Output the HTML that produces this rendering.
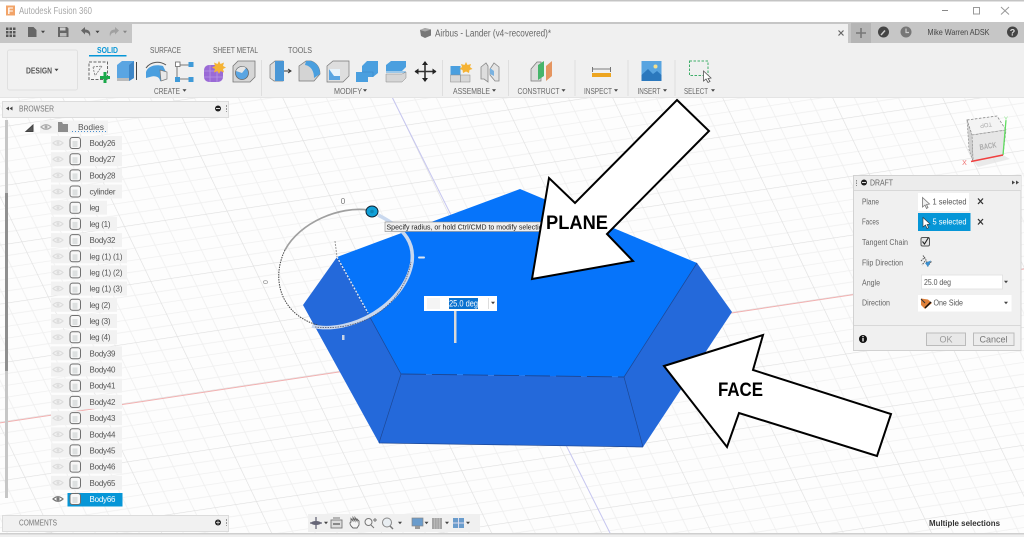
<!DOCTYPE html>
<html lang="en"><head><meta charset="utf-8"><title>Autodesk Fusion 360</title>
<style>
html,body{margin:0;padding:0;background:#fff;width:1024px;height:537px;overflow:hidden}
svg{display:block;filter:blur(.3px)}
text{font-family:"Liberation Sans",sans-serif;fill:#555;font-size:8px}
.t{font-size:8px;fill:#666}
.b{font-size:8px;fill:#555}
.p{font-size:8px;fill:#666}
</style></head><body>
<svg width="1024" height="537" viewBox="0 0 1024 537" xmlns="http://www.w3.org/2000/svg">
<defs>
<pattern id="grid" width="100" height="100" patternUnits="userSpaceOnUse" patternTransform="matrix(1.026 -.154 .264 .55 511 345)">
<rect width="100" height="100" fill="#fdfdfd"/>
<path d="M20 0V100M40 0V100M60 0V100M80 0V100" stroke="#efefef" stroke-width=".8" fill="none"/>
<path d="M0 20H100M0 40H100M0 60H100M0 80H100" stroke="#efefef" stroke-width="1.300" fill="none"/>
<path d="M0 0V100" stroke="#dedede" stroke-width="1.200" fill="none"/>
<path d="M0 0H100" stroke="#dedede" stroke-width="2" fill="none"/>
</pattern>
<g id="eye"><path d="M-5 0Q0-4.500 5 0Q0 4.500-5 0Z" fill="none" stroke="#ddd" stroke-width="1.200"/><circle r="1.500" fill="#ddd"/></g>
<g id="doc"><rect x="-5" y="-5.500" width="10.500" height="11" rx="2.500" fill="#f8f8f8" stroke="#6f6f6f" stroke-width="1"/><rect x="-2.500" y="-2" width="5" height="6" fill="#dde0e0"/></g>
<path id="caret" d="M-2-1.300H2L0 1.300Z" fill="#444"/>
</defs>

<!-- viewport -->
<rect y="97" width="1024" height="440" fill="url(#grid)"/>
<path d="M0 422.900L1024 269" stroke="#f2b0b0" stroke-width="1" fill="none"/>
<path d="M392 97L612 537" stroke="#c5c5f0" stroke-width="1" fill="none"/>

<!-- solid -->
<polygon points="520,189 697,263 624,377 401,374 337,257" fill="#0674fa"/>
<polygon points="337,257 401,374 379,443 303,305" fill="#2469da"/>
<polygon points="697,263 732,312 643,447 624,377" fill="#2469da"/>
<polygon points="401,374 624,377 643,447 379,443" fill="#2469da"/>
<path d="M624 377L697 263M401 374L379 443M624 377L643 447M337 257L401 374M379 443L643 447" fill="none" stroke="#1c4795" stroke-width=".7"/>
<path d="M401 374L624 377" fill="none" stroke="#1c4795" stroke-width=".9" stroke-dasharray="25 6"/>

<!-- radius manipulator -->
<path d="M368 210C340 206 300 222 285 250" fill="none" stroke="#a0a0a0" stroke-width="1.700"/>
<path d="M285 250C268 285 286 325 335 328" fill="none" stroke="#444" stroke-width="1" stroke-dasharray="1.500 1"/>
<path d="M312 326C350 335 405 305 412 262C414 245 408 230 378 215" fill="none" stroke="#c9d8ee" stroke-width="3.600"/>
<path d="M315 327C365 332 403 305 411 262" fill="none" stroke="#556" stroke-width=".8" stroke-dasharray="1.500 1"/>
<path d="M335 241L337 257" stroke="#999" stroke-width="1" stroke-dasharray="2 1" fill="none"/>
<path d="M337 257L368 313" stroke="#dfe6f2" stroke-width="1.400" stroke-dasharray="2 1.500" fill="none"/>
<ellipse cx="372" cy="211.500" rx="6" ry="5.500" fill="#10a0d8" stroke="#123" stroke-width="1"/>
<circle cx="372" cy="211.500" r="1.800" fill="#0c84b4"/>
<text x="343" y="204" style="font-size:8px;fill:#777" text-anchor="middle">0</text>
<text transform="translate(268,282) rotate(-90)" style="font-size:7px;fill:#888" text-anchor="middle">0</text>
<rect x="418" y="256.500" width="7" height="2" rx="1" fill="#dde6f0"/>
<rect x="342" y="335" width="2.500" height="5" fill="#c8d4e6"/>
<rect x="385" y="222" width="156" height="9.500" fill="#efefef" stroke="#888" stroke-width=".6"/>
<text x="386.500" y="229.500" style="font-size:7.500px;fill:#222" textLength="160" lengthAdjust="spacingAndGlyphs">Specify radius, or hold Ctrl/CMD to modify selection</text>

<rect x="454" y="311" width="2.500" height="32" fill="#d8d8d8"/>
<rect x="424" y="296" width="73" height="15" fill="#fff"/>
<rect x="427" y="298" width="13" height="11" fill="#f4f4f4"/>
<rect x="488" y="298" width="1" height="11" fill="#ddd"/>
<rect x="449" y="298" width="29" height="11" fill="#0a72d0"/>
<text x="449" y="306.500" style="font-size:9px;fill:#fff" textLength="29" lengthAdjust="spacingAndGlyphs">25.0 deg</text>
<use href="#caret" x="493" y="303"/>

<!-- call-out arrows -->
<polygon points="677,100 709,131 607,234 633,261 532,279 549,178 575,203" fill="#fff" stroke="#000" stroke-width="2" stroke-linejoin="miter"/>
<text x="546" y="229" textLength="62" lengthAdjust="spacingAndGlyphs" style="font-size:19px;font-weight:bold;fill:#000">PLANE</text>
<polygon points="664,366 763,335 753,370 891,414 877,456 739,413 727,447" fill="#fff" stroke="#000" stroke-width="2" stroke-linejoin="miter"/>
<text x="718" y="396" textLength="45" lengthAdjust="spacingAndGlyphs" style="font-size:19.500px;font-weight:bold;fill:#000">FACE</text>

<!-- title bar -->
<rect width="1024" height="22" fill="#fff"/>
<rect width="1024" height="1.500" fill="#c4c4c4"/>
<rect x="6" y="5.500" width="9" height="10" fill="#f2a469"/>
<text x="7.500" y="14" style="font-size:9.500px;font-weight:bold;fill:#fff">F</text>
<text x="19" y="14" textLength="73" lengthAdjust="spacingAndGlyphs" style="font-size:10px;fill:#a8a8a8">Autodesk Fusion 360</text>
<path d="M942 10.500H948" stroke="#888" stroke-width="1"/>
<rect x="973.500" y="7.500" width="6" height="6.500" fill="none" stroke="#999" stroke-width="1"/>
<path d="M1001 7L1009 14.500M1009 7L1001 14.500" stroke="#999" stroke-width="1"/>

<!-- toolbar -->
<rect y="22" width="1024" height="75" fill="#f0f0f0"/>
<rect y="22" width="1024" height="21" fill="#c6c6c6"/>
<rect x="132" y="24" width="716" height="19" fill="#f0f0f0"/>
<rect y="42" width="132" height="1" fill="#c6c6c6"/>
<rect y="97" width="1024" height="1" fill="#e4e4e4"/>

<!-- quick access icons -->
<g fill="#555"><rect x="6" y="27.500" width="2.500" height="2.500"/><rect x="9.500" y="27.500" width="2.500" height="2.500"/><rect x="13" y="27.500" width="2.500" height="2.500"/><rect x="6" y="31" width="2.500" height="2.500"/><rect x="9.500" y="31" width="2.500" height="2.500"/><rect x="13" y="31" width="2.500" height="2.500"/><rect x="6" y="34.500" width="2.500" height="2.500"/><rect x="9.500" y="34.500" width="2.500" height="2.500"/><rect x="13" y="34.500" width="2.500" height="2.500"/></g>
<path d="M28 27H33.500L36.500 30V37H28Z" fill="#666"/>
<use href="#caret" x="43" y="32"/>
<path d="M58 27H67L68.500 28.500V37H58Z" fill="#666"/><rect x="60" y="27.500" width="5.500" height="3" fill="#ccc"/><rect x="60" y="33" width="6.500" height="3.500" fill="#bbb"/>
<path d="M81 30.500L85 27V29.500C89 29.500 91 32 90 36.500C89 33.500 88 32.500 85 32.500V34.500Z" fill="#666"/>
<use href="#caret" x="97.500" y="32"/>
<path d="M119 30.500L115 27V29.500C111 29.500 109 32 110 36.500C111 33.500 112 32.500 115 32.500V34.500Z" fill="#a0a0a0"/>
<use href="#caret" x="125" y="32" opacity=".5"/>

<!-- document title -->
<path d="M420 30L425 28L431 29.500V35.500L425 38L421 36Z" fill="#777"/><path d="M420 30L425 31.500L431 29.500L425 28Z" fill="#aaa"/>
<text x="435" y="36.500" textLength="116" lengthAdjust="spacingAndGlyphs" style="font-size:10px;fill:#666">Airbus - Lander (v4~recovered)*</text>
<path d="M838.500 30.500L843.500 35.500M843.500 30.500L838.500 35.500" stroke="#666" stroke-width="1.200"/>

<!-- right side of band -->
<rect x="851" y="23" width="20" height="20" fill="#b5b5b5"/>
<path d="M861 28V38M856 33H866" stroke="#777" stroke-width="1.600"/>
<circle cx="883.500" cy="32" r="5.500" fill="#444"/><path d="M881 35L885 30.500" stroke="#ccc" stroke-width="1.500"/>
<circle cx="906" cy="32" r="5.500" fill="#777"/><path d="M906 28.500V32.500H909" stroke="#ccc" stroke-width="1.200" fill="none"/>
<text x="927.500" y="35" textLength="62" lengthAdjust="spacingAndGlyphs" style="font-size:8.500px;fill:#444">Mike Warren ADSK</text>
<circle cx="1012.500" cy="32" r="5.500" fill="#444"/>
<text x="1012.500" y="35.500" text-anchor="middle" style="font-size:9px;font-weight:bold;fill:#ddd">?</text>

<!-- design button -->
<rect x="7.500" y="50" width="70" height="40" rx="2" fill="#f1f1f1" stroke="#e0e0e0"/>
<text x="26" y="73.500" textLength="26" lengthAdjust="spacingAndGlyphs" style="font-size:8px;font-weight:bold;fill:#555">DESIGN</text>
<use href="#caret" x="56.500" y="70"/>

<!-- tabs -->
<text x="97" y="53" textLength="21" lengthAdjust="spacingAndGlyphs" style="font-size:8px;fill:#0696d7;font-weight:bold">SOLID</text>
<rect x="89" y="55" width="37.500" height="1.500" fill="#0696d7"/>
<text x="150" y="53" textLength="31" lengthAdjust="spacingAndGlyphs" class="t">SURFACE</text>
<text x="213" y="53" textLength="45" lengthAdjust="spacingAndGlyphs" class="t">SHEET METAL</text>
<text x="288" y="53" textLength="24" lengthAdjust="spacingAndGlyphs" class="t">TOOLS</text>

<!-- panel labels -->
<text x="154" y="94" textLength="26" lengthAdjust="spacingAndGlyphs" class="t">CREATE</text><use href="#caret" x="184.500" y="90.500"/>
<text x="334" y="94" textLength="28" lengthAdjust="spacingAndGlyphs" class="t">MODIFY</text><use href="#caret" x="365" y="90.500"/>
<text x="453" y="94" textLength="37" lengthAdjust="spacingAndGlyphs" class="t">ASSEMBLE</text><use href="#caret" x="494" y="90.500"/>
<text x="517.500" y="94" textLength="42" lengthAdjust="spacingAndGlyphs" class="t">CONSTRUCT</text><use href="#caret" x="563.500" y="90.500"/>
<text x="584" y="94" textLength="28" lengthAdjust="spacingAndGlyphs" class="t">INSPECT</text><use href="#caret" x="616" y="90.500"/>
<text x="637.500" y="94" textLength="23" lengthAdjust="spacingAndGlyphs" class="t">INSERT</text><use href="#caret" x="665" y="90.500"/>
<text x="684" y="94" textLength="24" lengthAdjust="spacingAndGlyphs" class="t">SELECT</text><use href="#caret" x="713" y="90.500"/>
<path d="M261.500 60V96M442.500 60V96M508.500 60V96M575 60V96M628 60V96M675 60V96" stroke="#dedede" stroke-width="1"/>

<!-- CREATE icons -->
<rect x="89" y="62" width="18.500" height="17.500" fill="#f5f5f5" stroke="#666" stroke-width="1" stroke-dasharray="3 1.500"/>
<path d="M93 67L102 66M93 67L95 76M102 66L95 76" stroke="#777" stroke-width=".8" stroke-dasharray="2 1" fill="none"/>
<path d="M105 72V83M100 77.500H110" stroke="#1aa84a" stroke-width="3"/>
<path d="M117 65L122 61H134V78L129 81H117Z" fill="#5aa5e2"/><path d="M117 65H129V81H117Z" fill="#5aa5e2"/><path d="M129 65L134 61V78L129 81Z" fill="#3d85c6"/><path d="M117 78H129V81H117Z" fill="#bbb"/><path d="M136.500 62V80" stroke="#444" stroke-width="1"/>
<path d="M146 72C148 66 155 64 163 66L166 72V79L160 81C160 77 155 75 150 77L146 78Z" fill="#4a9fdf"/><path d="M160 70L167 72V79L161 81Z" fill="#e8e8e8" stroke="#777" stroke-width=".7"/><path d="M146 68C151 61 160 61 166 65" stroke="#555" stroke-width="1" fill="none"/>
<path d="M179 65H189M177 67V77M179 79H189" stroke="#777" stroke-width="1"/>
<rect x="175.500" y="62" width="4.500" height="4.500" fill="#fff" stroke="#666" stroke-width=".8"/><rect x="188.500" y="62" width="5" height="5" fill="#3f9ad8"/><rect x="175" y="77" width="5" height="5" fill="#3f9ad8"/><rect x="188.500" y="77" width="5" height="5" fill="#3f9ad8"/>
<rect x="204" y="65" width="19" height="17" rx="5" fill="#9a6ad6"/><path d="M210 65V82M217 65V82M204 71H223M204 77H223" stroke="#b796e6" stroke-width=".8"/><path d="M219 61L220.500 64L224 62.500L223 66L226 67.500L223 69L224 72.500L220.500 71L219 74L217.500 71L214 72.500L215 69L212 67.500L215 66L214 62.500L217.500 64Z" fill="#f5b335"/>
<path d="M233 66L238 61H255V77L250 82H233Z" fill="#d6d6d6" stroke="#777" stroke-width=".8"/><circle cx="242" cy="73" r="6.500" fill="#5aa5e2" stroke="#666" stroke-width=".8"/><path d="M242 73L246 68A6.500 6.500 0 0 0 236 71Z" fill="#e6e6e6"/>

<!-- MODIFY icons -->
<path d="M270 65L275 61H283V81H274L270 78Z" fill="#ddd" stroke="#777" stroke-width=".7"/><path d="M275 61H284V81H275Z" fill="#4a97d6"/><path d="M284 71H290M288 69L291 71L288 73" stroke="#333" stroke-width="1" fill="none"/>
<path d="M299 66L306 61H311C317 63 320 68 320 74L314 81H299Z" fill="#d4d4d4" stroke="#777" stroke-width=".7"/><path d="M306 61H311C317 63 320 68 320 74L314 78C314 71 311 66 305 65Z" fill="#4a9fdf"/>
<path d="M327 66L333 61H349V76L343 82H327Z" fill="#dedede" stroke="#777" stroke-width=".7"/><rect x="329" y="69" width="11" height="11" fill="#5aa5e2"/><path d="M329 69H340V76H334Z" fill="#e8f3fb"/>
<path d="M356 72L362 72V66L367 61H378V73L373 77H368V82H356Z" fill="#4a9fdf"/><path d="M362 72H373V77" stroke="#3a86c6" stroke-width=".6" fill="none"/>
<path d="M386 65L391 61H406V67L402 71H386Z" fill="#4a9fdf"/><path d="M386 72H406" stroke="#4a9fdf" stroke-width="1"/><path d="M386 74L402 74L406 72V78L402 82H386Z" fill="#d6d6d6" stroke="#888" stroke-width=".5"/>
<path d="M425 62V81M415 71.500H436" stroke="#333" stroke-width="1.600"/><path d="M425 61L428 65H422ZM425 82L428 78H422ZM414.500 71.500L418.500 68.500V74.500ZM436.500 71.500L432.500 68.500V74.500Z" fill="#222"/>

<!-- ASSEMBLE icons -->
<rect x="450.500" y="66" width="10" height="9" fill="#4a9fdf"/><rect x="450.500" y="75" width="10" height="7" fill="#d8d8d8" stroke="#888" stroke-width=".5"/><rect x="460.500" y="75" width="9.500" height="7" fill="#d8d8d8" stroke="#888" stroke-width=".5"/>
<path d="M466 62L467.500 65L471 64L470 67L472.500 69L469.500 70L469 73L466 71.500L463 73L462.500 70L459.500 69L462 67L461 64L464.500 65Z" fill="#f5b335"/>
<path d="M481 67L486 63L488 66V82L484 79H481Z" fill="#ddd" stroke="#888" stroke-width=".8"/><path d="M499 67L494 63L490 69V75L495 81H499Z" fill="#e4e4e4" stroke="#888" stroke-width=".8"/><path d="M490 68L494 71V76L490 74Z" fill="#7ab2e0"/>

<!-- CONSTRUCT icon -->
<path d="M531 69L537 62H541V81H531Z" fill="#ddd" stroke="#777" stroke-width=".7"/><path d="M538 65L544 61V76L538 80Z" fill="#47b56b"/><path d="M546 66L552 61V76L546 81Z" fill="#e59560"/>

<!-- INSPECT icon -->
<rect x="592" y="73" width="19" height="4" fill="#eda520"/><path d="M592.500 67V72M610.500 67V72M593 69H610" stroke="#555" stroke-width=".8" fill="none"/>

<!-- INSERT icon -->
<rect x="641.500" y="61" width="20" height="20" fill="#58a4e0"/><circle cx="655.500" cy="66.500" r="2" fill="#f2df8e"/><path d="M641.500 81V75L648 69L653 74L657 71L661.500 75V81Z" fill="#2b78bd"/>

<!-- SELECT icon -->
<rect x="689.500" y="61" width="18.500" height="14.500" fill="#f0f0f0" stroke="#3fae6a" stroke-width="1" stroke-dasharray="2.500 1.500"/>
<path d="M703.500 71L703.500 81L706 79L708 82.500L710 81.500L708 78.500L711 78Z" fill="#fff" stroke="#555" stroke-width=".8"/>

<!-- browser -->
<rect x="2.500" y="101.500" width="226" height="16" fill="#f1f1f1" stroke="#dcdcdc"/>
<path d="M9 106.500V110.500L6 108.500ZM12.500 106.500V110.500L9.500 108.500Z" fill="#444"/>
<text x="19" y="111.500" textLength="35" lengthAdjust="spacingAndGlyphs" style="font-size:8px;fill:#777">BROWSER</text>
<circle cx="218" cy="108.500" r="3" fill="#222"/><rect x="216" y="108" width="4" height="1" fill="#ddd"/>
<path d="M226.500 105V112" stroke="#999" stroke-width="1" stroke-dasharray="2 1"/>

<!-- scrollbar -->
<rect x="5" y="120" width="3" height="378" fill="#c6c6c6"/>
<rect x="5" y="193" width="3" height="178" fill="#8f8f8f"/>

<!-- bodies -->
<rect x="40" y="120.500" width="68" height="13" fill="#f3f3f3"/>
<path d="M26 131.500L33 125V131.500Z" fill="#555" stroke="#444" stroke-width="1"/>
<path d="M41 127Q46 122.500 51 127Q46 131.500 41 127Z" fill="none" stroke="#aaa" stroke-width="1.200"/><circle cx="46" cy="127" r="1.500" fill="#aaa"/>
<path d="M58 122H62L63 124H68V132H58Z" fill="#8c8c8c"/>
<text x="78" y="130" class="b" textLength="26" lengthAdjust="spacingAndGlyphs">Bodies</text>
<path d="M72 131.500H107" stroke="#4a8fcf" stroke-width="1" stroke-dasharray="1 2"/>

<g fill="#f2f2f2">
<rect x="51" y="136" width="71" height="14"/><rect x="51" y="152.200" width="71" height="14"/><rect x="51" y="168.400" width="71" height="14"/><rect x="51" y="184.500" width="71" height="14"/>
<rect x="51" y="200.700" width="56" height="14"/><rect x="51" y="216.900" width="66" height="14"/><rect x="51" y="233.100" width="71" height="14"/><rect x="51" y="249.300" width="76" height="14"/>
<rect x="51" y="265.400" width="76" height="14"/><rect x="51" y="281.600" width="76" height="14"/><rect x="51" y="297.800" width="66" height="14"/><rect x="51" y="314" width="66" height="14"/>
<rect x="51" y="330.200" width="66" height="14"/><rect x="51" y="346.300" width="71" height="14"/><rect x="51" y="362.500" width="71" height="14"/><rect x="51" y="378.700" width="71" height="14"/>
<rect x="51" y="394.900" width="71" height="14"/><rect x="51" y="411.100" width="71" height="14"/><rect x="51" y="427.300" width="71" height="14"/><rect x="51" y="443.400" width="71" height="14"/>
<rect x="51" y="459.600" width="71" height="14"/><rect x="51" y="475.800" width="71" height="14"/>
</g>
<rect x="67.500" y="493" width="55" height="13.500" fill="#0696d7"/>

<use href="#eye" x="58" y="143"/><use href="#doc" x="75" y="143"/><text x="89.500" y="146" class="b" textLength="26">Body26</text>
<use href="#eye" x="58" y="159.200"/><use href="#doc" x="75" y="159.200"/><text x="89.500" y="162.200" class="b" textLength="26">Body27</text>
<use href="#eye" x="58" y="175.400"/><use href="#doc" x="75" y="175.400"/><text x="89.500" y="178.400" class="b" textLength="26">Body28</text>
<use href="#eye" x="58" y="191.500"/><use href="#doc" x="75" y="191.500"/><text x="89.500" y="194.500" class="b" textLength="26">cylinder</text>
<use href="#eye" x="58" y="207.700"/><use href="#doc" x="75" y="207.700"/><text x="89.500" y="210.700" class="b" textLength="10">leg</text>
<use href="#eye" x="58" y="223.900"/><use href="#doc" x="75" y="223.900"/><text x="89.500" y="226.900" class="b" textLength="21">leg (1)</text>
<use href="#eye" x="58" y="240.100"/><use href="#doc" x="75" y="240.100"/><text x="89.500" y="243.100" class="b" textLength="26">Body32</text>
<use href="#eye" x="58" y="256.300"/><use href="#doc" x="75" y="256.300"/><text x="89.500" y="259.300" class="b" textLength="33">leg (1) (1)</text>
<use href="#eye" x="58" y="272.400"/><use href="#doc" x="75" y="272.400"/><text x="89.500" y="275.400" class="b" textLength="33">leg (1) (2)</text>
<use href="#eye" x="58" y="288.600"/><use href="#doc" x="75" y="288.600"/><text x="89.500" y="291.600" class="b" textLength="33">leg (1) (3)</text>
<use href="#eye" x="58" y="304.800"/><use href="#doc" x="75" y="304.800"/><text x="89.500" y="307.800" class="b" textLength="21">leg (2)</text>
<use href="#eye" x="58" y="321"/><use href="#doc" x="75" y="321"/><text x="89.500" y="324" class="b" textLength="21">leg (3)</text>
<use href="#eye" x="58" y="337.200"/><use href="#doc" x="75" y="337.200"/><text x="89.500" y="340.200" class="b" textLength="21">leg (4)</text>
<use href="#eye" x="58" y="353.300"/><use href="#doc" x="75" y="353.300"/><text x="89.500" y="356.300" class="b" textLength="26">Body39</text>
<use href="#eye" x="58" y="369.500"/><use href="#doc" x="75" y="369.500"/><text x="89.500" y="372.500" class="b" textLength="26">Body40</text>
<use href="#eye" x="58" y="385.700"/><use href="#doc" x="75" y="385.700"/><text x="89.500" y="388.700" class="b" textLength="26">Body41</text>
<use href="#eye" x="58" y="401.900"/><use href="#doc" x="75" y="401.900"/><text x="89.500" y="404.900" class="b" textLength="26">Body42</text>
<use href="#eye" x="58" y="418.100"/><use href="#doc" x="75" y="418.100"/><text x="89.500" y="421.100" class="b" textLength="26">Body43</text>
<use href="#eye" x="58" y="434.300"/><use href="#doc" x="75" y="434.300"/><text x="89.500" y="437.300" class="b" textLength="26">Body44</text>
<use href="#eye" x="58" y="450.400"/><use href="#doc" x="75" y="450.400"/><text x="89.500" y="453.400" class="b" textLength="26">Body45</text>
<use href="#eye" x="58" y="466.600"/><use href="#doc" x="75" y="466.600"/><text x="89.500" y="469.600" class="b" textLength="26">Body46</text>
<use href="#eye" x="58" y="482.800"/><use href="#doc" x="75" y="482.800"/><text x="89.500" y="485.800" class="b" textLength="26">Body65</text>
<path d="M53 499Q58 494.500 63 499Q58 503.500 53 499Z" fill="none" stroke="#777" stroke-width="1.200"/><circle cx="58" cy="499" r="1.600" fill="#777"/>
<use href="#doc" x="75" y="499"/><text x="89.500" y="502" textLength="26" style="font-size:8px;fill:#fff">Body66</text>

<!-- comments -->
<rect x="2.500" y="515.500" width="226" height="16" fill="#f1f1f1" stroke="#dcdcdc"/>
<text x="19" y="525.500" textLength="38" lengthAdjust="spacingAndGlyphs" style="font-size:8px;fill:#777">COMMENTS</text>
<circle cx="218" cy="522.500" r="3" fill="#222"/><path d="M216 522.500H220M218 520.500V524.500" stroke="#ddd" stroke-width=".8"/>
<path d="M226.500 519V526" stroke="#999" stroke-width="1" stroke-dasharray="2 1"/>

<!-- navigation bar -->
<rect x="308" y="514" width="172" height="18" fill="#f0f0f0"/>
<path d="M310 523H322M316 517V529" stroke="#667" stroke-width="1.300"/><ellipse cx="316" cy="523" rx="5" ry="2" fill="#667"/>
<use href="#caret" x="326" y="523"/>
<rect x="331" y="520" width="11" height="8" fill="#ddd" stroke="#777" stroke-width=".9"/><path d="M333 518H340" stroke="#777" stroke-width="1"/><rect x="333" y="523" width="7" height="2" fill="#888"/>
<path d="M352 527C349 524 350 522 351 522V518.500L353 521V517.500L355 521V517.500L357 521V519L359 521V525L357 528H353Z" fill="#f5f5f5" stroke="#666" stroke-width=".9"/>
<circle cx="368.500" cy="522" r="3.500" fill="#f5f5f5" stroke="#777" stroke-width="1"/><path d="M371 525L374 528M375 518V522M373 520H377" stroke="#777" stroke-width="1"/>
<circle cx="387" cy="522.500" r="4.500" fill="#e9eef2" stroke="#888" stroke-width="1"/><path d="M390 526L393 529" stroke="#777" stroke-width="1.400"/>
<use href="#caret" x="400" y="523"/>
<rect x="412" y="518" width="11" height="8" fill="#6a9ccc" stroke="#888" stroke-width=".7"/><rect x="415" y="526" width="5" height="3" fill="#999"/>
<use href="#caret" x="426.500" y="523"/>
<rect x="432" y="518" width="10" height="11" fill="#a5a5a5"/><path d="M434.500 518V529M437 518V529M439.500 518V529" stroke="#c4c4c4" stroke-width=".7"/>
<use href="#caret" x="447" y="523"/>
<rect x="453" y="518" width="11" height="10" fill="#6a9ccc"/><path d="M458.500 518V528M453 523H464" stroke="#dde" stroke-width="1"/>
<use href="#caret" x="468" y="523"/>

<text x="929" y="526" textLength="71" lengthAdjust="spacingAndGlyphs" style="font-size:8px;font-weight:bold;fill:#333">Multiple selections</text>
<rect y="533.500" width="1024" height="3.500" fill="#efefef"/>
<rect y="533" width="1024" height="1.500" fill="#cfcfcf"/>

<!-- view cube -->
<path d="M973 161L1003 155L1010 159L978 167Z" fill="#ddd" opacity=".6"/>
<polygon points="967,120 997,116 1006,130 972,135" fill="#f4f4f4" stroke="#888" stroke-width=".8" stroke-dasharray="2.500 1.500"/>
<polygon points="972,135 1006,130 1003,155 973,161" fill="#e6e6e6" stroke="#999" stroke-width=".8" stroke-dasharray="2.500 1.500"/>
<path d="M967 120L972 135L973 161L969 150Z" fill="#d0d0d0" stroke="#888" stroke-width=".6" stroke-dasharray="2 1.500"/>
<path d="M1003 155L1006 120" stroke="#5fdc5f" stroke-width="1.300"/>
<path d="M971 161.500L1003 155" stroke="#f04040" stroke-width="1.500"/>
<text x="1006" y="121" style="font-size:6px;fill:#8ce88c" text-anchor="middle">Y</text>
<text x="964.500" y="165" style="font-size:7px;fill:#f07070" text-anchor="middle">X</text>
<text transform="translate(980,150) rotate(-9)" textLength="17" lengthAdjust="spacingAndGlyphs" style="font-size:8px;font-weight:bold;fill:#aaa">BACK</text>
<text transform="translate(979,126) rotate(172) translate(-13,2)" textLength="12" lengthAdjust="spacingAndGlyphs" style="font-size:6px;fill:#aaa">TOP</text>

<!-- draft dialog -->
<rect x="853.500" y="175.500" width="167.500" height="175" fill="#f0f0f0" stroke="#d2d2d2"/>
<rect x="854" y="176" width="167" height="14" fill="#ececec"/>
<path d="M854 190.500H1021M854 325.500H1021" stroke="#d8d8d8" stroke-width="1"/>
<path d="M856.500 180V186" stroke="#888" stroke-width="1" stroke-dasharray="1.500 1"/>
<circle cx="864" cy="182.500" r="3" fill="#222"/><rect x="862" y="182" width="4" height="1" fill="#ddd"/>
<text x="870" y="185.500" textLength="23" lengthAdjust="spacingAndGlyphs" style="font-size:8px;fill:#666">DRAFT</text>
<path d="M1012 180.500V184.500L1015 182.500ZM1016 180.500V184.500L1019 182.500Z" fill="#444"/>

<text x="862" y="204.500" textLength="17" lengthAdjust="spacingAndGlyphs" class="p">Plane</text>
<rect x="918" y="193" width="51" height="18" fill="#fff"/>
<path d="M922.500 197.500V207L925 205L926.500 208.500L928 207.500L926.500 204.500L929.500 204Z" fill="#f0f0f0" stroke="#777" stroke-width=".8"/>
<text x="932.500" y="204.500" textLength="34" lengthAdjust="spacingAndGlyphs" style="font-size:8px;fill:#555">1 selected</text>
<path d="M978 198.500L983 204M983 198.500L978 204" stroke="#333" stroke-width="1.300"/>

<text x="862" y="224.500" textLength="17" lengthAdjust="spacingAndGlyphs" class="p">Faces</text>
<rect x="918" y="213" width="52.500" height="18" fill="#0696d7"/>
<path d="M923 217.500V227L925.500 225L927 228.500L928.500 227.500L927 224.500L930 224Z" fill="#fff" stroke="#333" stroke-width=".6"/>
<text x="932.500" y="224.500" textLength="34" lengthAdjust="spacingAndGlyphs" style="font-size:8px;fill:#fff">5 selected</text>
<path d="M978 219L983 224.500M983 219L978 224.500" stroke="#333" stroke-width="1.300"/>

<text x="862" y="245" textLength="46" lengthAdjust="spacingAndGlyphs" class="p">Tangent Chain</text>
<rect x="921" y="237.500" width="8.500" height="8.500" rx="1.500" fill="#e4e4e4" stroke="#555" stroke-width="1"/>
<path d="M922.500 241.500L924.500 244L928.500 237.500" stroke="#222" stroke-width="1.100" fill="none"/>

<text x="862" y="265.500" textLength="41" lengthAdjust="spacingAndGlyphs" class="p">Flip Direction</text>
<path d="M921 261L925 257M923 255.500L926 260L922 265M926 262H931L927 267" stroke="#555" stroke-width="1" fill="none" stroke-dasharray="1.500 .8"/>
<path d="M925 263L931 260.500L928 267Z" fill="#3a8fd0"/>

<text x="862" y="285.500" textLength="18" lengthAdjust="spacingAndGlyphs" class="p">Angle</text>
<rect x="921.500" y="275" width="81" height="14" fill="#fff" stroke="#e0e0e0" stroke-width=".8"/>
<text x="924" y="285" textLength="27" lengthAdjust="spacingAndGlyphs" style="font-size:8px;fill:#555">25.0 deg</text>
<use href="#caret" x="1006" y="282"/>

<text x="862" y="305.500" textLength="28" lengthAdjust="spacingAndGlyphs" class="p">Direction</text>
<rect x="918" y="295" width="93.500" height="16.500" fill="#fff"/>
<path d="M921 298.500L928 299.500L932 303L925 309L921 305Z" fill="#e0813a"/><path d="M925 308L931 302" stroke="#111" stroke-width="1.500"/><path d="M921 299L925 303" stroke="#333" stroke-width="1"/>
<text x="933.500" y="305.500" textLength="29.500" lengthAdjust="spacingAndGlyphs" style="font-size:8px;fill:#555">One Side</text>
<use href="#caret" x="1006" y="303"/>

<circle cx="863" cy="339" r="4" fill="#111"/><rect x="862.300" y="338" width="1.400" height="3.500" fill="#eee"/><rect x="862.300" y="336" width="1.400" height="1.200" fill="#eee"/>
<rect x="926.500" y="333" width="39" height="12.500" fill="#e8e8e8" stroke="#bbb"/>
<text x="946" y="342.500" text-anchor="middle" style="font-size:9px;fill:#9a9a9a">OK</text>
<rect x="973.500" y="333" width="40.500" height="12.500" fill="#ececec" stroke="#bbb"/>
<text x="993.500" y="342.500" text-anchor="middle" style="font-size:9px;fill:#777">Cancel</text>
</svg>
</body></html>
